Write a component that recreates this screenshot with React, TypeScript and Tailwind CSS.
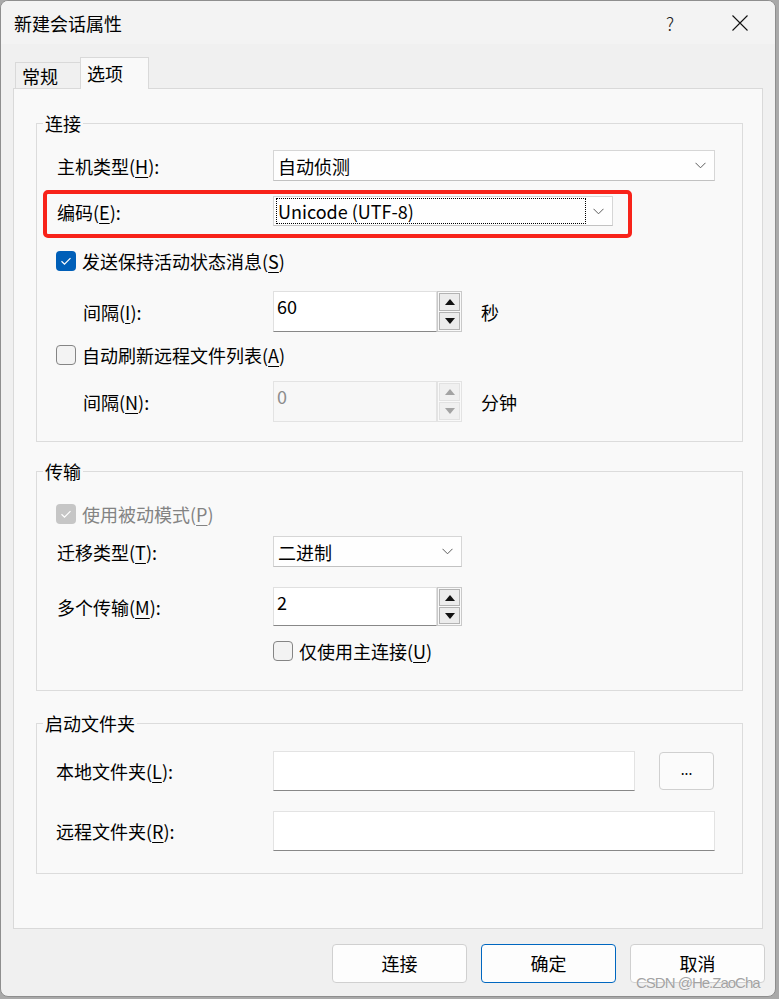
import React from 'react';

const Key = ({ k }: { k: string }) => (
  <span className="underline decoration-1 underline-offset-[3px]">{k}</span>
);

const Chevron = () => (
  <svg width="11" height="7" viewBox="0 0 11 7" className="shrink-0">
    <path d="M0.5 0.8 L5.5 5.8 L10.5 0.8" fill="none" stroke="#5c5c5c" strokeWidth="1" />
  </svg>
);

const Combo = ({ text, width, focused }: { text: string; width: string; focused?: boolean }) => (
  <div
    className={`flex h-full items-center justify-between border border-[#d6d6d6] border-b-[#c2c2c2] bg-[#fefefe] pl-[2px] pr-[8px] ${width}`}
  >
    {focused ? (
      <span className="flex h-[26px] w-[310px] items-center border border-dotted border-black pl-[1px]">{text}</span>
    ) : (
      <span className="pl-[2px]">{text}</span>
    )}
    <Chevron />
  </div>
);

const Arrow = ({ up, color }: { up?: boolean; color: string }) => (
  <svg width="10" height="6" viewBox="0 0 10 6">
    <path d={up ? 'M0 6 L5 0 L10 6 Z' : 'M0 0 L5 6 L10 0 Z'} fill={color} />
  </svg>
);

const Spin = ({ value, disabled, height }: { value: string; disabled?: boolean; height: string }) => (
  <div className={`flex w-[189px] ${height}`}>
    <div
      className={`w-[164px] border pl-[3px] pt-[2px] ${
        disabled
          ? 'border-[#e3e3e3] bg-[#f7f7f7] text-[#8c8c8c]'
          : 'border-[#e0e0e0] border-b-[#888888] bg-white'
      }`}
    >
      {value}
    </div>
    <div className={`flex w-[25px] flex-col gap-[1px] border p-[1px] ${disabled ? 'border-[#e3e3e3]' : 'border-[#c9c9c9]'}`}>
      <div
        className={`flex flex-1 items-center justify-center border ${
          disabled ? 'border-[#e2e2e2] bg-[#f0f0f0]' : 'border-[#b3b3b3] bg-[#ececec]'
        }`}
      >
        <Arrow up color={disabled ? '#a3a3a3' : '#111111'} />
      </div>
      <div
        className={`flex flex-1 items-center justify-center border ${
          disabled ? 'border-[#e2e2e2] bg-[#f0f0f0]' : 'border-[#b3b3b3] bg-[#ececec]'
        }`}
      >
        <Arrow color={disabled ? '#a3a3a3' : '#111111'} />
      </div>
    </div>
  </div>
);

const Check = ({ state }: { state: 'on' | 'off' | 'disabled' }) => {
  if (state === 'off') {
    return <div className="h-[20px] w-[20px] shrink-0 rounded-[4px] border border-[#858585] bg-[#f3f3f3]" />;
  }
  return (
    <div
      className={`flex h-[20px] w-[20px] shrink-0 items-center justify-center rounded-[4px] ${
        state === 'on' ? 'bg-[#005fb8]' : 'bg-[#c6c6c6]'
      }`}
    >
      <svg width="20" height="20" viewBox="0 0 20 20">
        <path d="M5.5 10.3 L8.5 13.2 L14.5 7.2" fill="none" stroke="white" strokeWidth="1.2" />
      </svg>
    </div>
  );
};

const Edit = ({ width }: { width: string }) => (
  <div className={`h-[40px] border border-[#e3e3e3] border-b-[#888888] bg-white ${width}`} />
);

const Group = ({ title, height, top, children }: { title: string; height: string; top: string; children: React.ReactNode }) => (
  <div className={`relative flex w-[707px] flex-col border border-[#dcdcdc] ${height} ${top}`}>
    <span className="absolute left-[6px] top-[-13px] bg-[#f9f9f9] px-[2px]">{title}</span>
    {children}
  </div>
);

export default function App() {
  return (
    <div className="relative h-[999px] w-[779px] bg-[#a9a9a9] font-['Noto_Sans_CJK_SC',sans-serif] text-[18px] leading-[24px] text-black">
      <div className="flex h-[997px] w-[776px] flex-col overflow-hidden rounded-[8px] border border-[#8e8e8e] bg-[#f0f0f0]">
        {/* title bar */}
        <div className="flex h-[43px] items-center bg-[#f3f3f3] pl-[13px]">
          <span>新建会话属性</span>
          <div className="ml-auto flex h-full">
            <div className="flex w-[70px] items-center justify-center font-light text-[#222]">?</div>
            <div className="flex w-[70px] items-center justify-center">
              <svg width="16" height="16" viewBox="0 0 16 16">
                <path d="M0.5 0.5 L15.5 15.5 M15.5 0.5 L0.5 15.5" stroke="#111" strokeWidth="1.1" />
              </svg>
            </div>
          </div>
        </div>

        <div className="px-[12px]">
          {/* tabs */}
          <div className="flex h-[44px] items-end">
            <div className="ml-[2px] flex h-[26px] w-[66px] items-center border border-b-0 border-[#d9d9d9] bg-[#f0f0f0] pl-[6px]">
              常规
            </div>
            <div className="relative z-10 -mb-px -ml-px flex h-[32px] w-[69px] items-start border border-b-0 border-[#d9d9d9] bg-[#f9f9f9] pl-[6px] pt-[3px]">
              选项
            </div>
          </div>

          {/* panel */}
          <div className="flex h-[841px] w-[750px] flex-col border border-[#d9d9d9] bg-[#f9f9f9] px-[22px]">
            <Group title="连接" height="h-[319px]" top="mt-[34px]">
              <div className="mt-[26px] flex h-[31px] items-center">
                <div className="w-[236px] pl-[20px]">
                  主机类型(<Key k="H" />):
                </div>
                <Combo text="自动侦测" width="w-[442px]" />
              </div>

              <div className="ml-[6px] mt-[9px] flex h-[48px] w-[589px] items-start rounded-[5px] border-[4px] border-[#f8231a]">
                <div className="mt-[6px] w-[226px] pl-[10px]">
                  编码(<Key k="E" />):
                </div>
                <div className="mt-[2px] h-[30px]">
                  <Combo text="Unicode (UTF-8)" width="w-[340px]" focused />
                </div>
              </div>

              <div className="mt-[13px] flex h-[20px] items-center gap-[6px] pl-[19px]">
                <Check state="on" />
                <span>
                  发送保持活动状态消息(<Key k="S" />)
                </span>
              </div>

              <div className="mt-[20px] flex items-center">
                <div className="w-[236px] pl-[46px]">
                  间隔(<Key k="I" />):
                </div>
                <Spin value="60" height="h-[41px]" />
                <span className="ml-[19px]">秒</span>
              </div>

              <div className="mt-[13px] flex h-[20px] items-center gap-[6px] pl-[19px]">
                <Check state="off" />
                <span>
                  自动刷新远程文件列表(<Key k="A" />)
                </span>
              </div>

              <div className="mt-[16px] flex items-center">
                <div className="w-[236px] pl-[46px]">
                  间隔(<Key k="N" />):
                </div>
                <Spin value="0" disabled height="h-[41px]" />
                <span className="ml-[19px]">分钟</span>
              </div>
            </Group>

            <Group title="传输" height="h-[220px]" top="mt-[29px]">
              <div className="mt-[32px] flex h-[20px] items-center gap-[6px] pl-[19px]">
                <Check state="disabled" />
                <span className="text-[#838383]">
                  使用被动模式(<Key k="P" />)
                </span>
              </div>

              <div className="mt-[12px] flex h-[31px] items-center">
                <div className="w-[236px] pl-[20px]">
                  迁移类型(<Key k="T" />):
                </div>
                <Combo text="二进制" width="w-[189px]" />
              </div>

              <div className="mt-[20px] flex items-center">
                <div className="w-[236px] pl-[20px]">
                  多个传输(<Key k="M" />):
                </div>
                <Spin value="2" height="h-[39px]" />
              </div>

              <div className="mt-[15px] flex h-[20px] items-center gap-[6px] pl-[236px]">
                <Check state="off" />
                <span>
                  仅使用主连接(<Key k="U" />)
                </span>
              </div>
            </Group>

            <Group title="启动文件夹" height="h-[151px]" top="mt-[32px]">
              <div className="mt-[27px] flex items-center">
                <div className="w-[236px] pl-[19px]">
                  本地文件夹(<Key k="L" />):
                </div>
                <Edit width="w-[362px]" />
                <div className="ml-[24px] flex h-[38px] w-[55px] items-center justify-center rounded-[4px] border border-[#d0d0d0] bg-[#fbfbfb] pb-[4px] text-[14px]">
                  ...
                </div>
              </div>
              <div className="mt-[20px] flex items-center">
                <div className="w-[236px] pl-[19px]">
                  远程文件夹(<Key k="R" />):
                </div>
                <Edit width="w-[442px]" />
              </div>
            </Group>
          </div>
        </div>

        {/* buttons */}
        <div className="mt-[15px] flex justify-end gap-[14px] pr-[10px]">
          <button className="h-[39px] w-[135px] rounded-[4px] border border-[#d0d0d0] bg-[#fdfdfd] pb-[2px] leading-[20px]">连接</button>
          <button className="h-[39px] w-[135px] rounded-[4px] border border-[#0067c0] bg-[#fdfdfd] pb-[2px] leading-[20px]">确定</button>
          <button className="h-[39px] w-[135px] rounded-[4px] border border-[#d0d0d0] bg-[#fdfdfd] pb-[2px] leading-[20px]">取消</button>
        </div>
      </div>

      <span className="absolute left-[636px] top-[975px] font-['Liberation_Sans',sans-serif] text-[15px] leading-[15px] tracking-[-1px] text-[#a3a3a3] [text-shadow:0_0_1px_#ffffff]">
        CSDN @He.ZaoCha
      </span>
    </div>
  );
}
